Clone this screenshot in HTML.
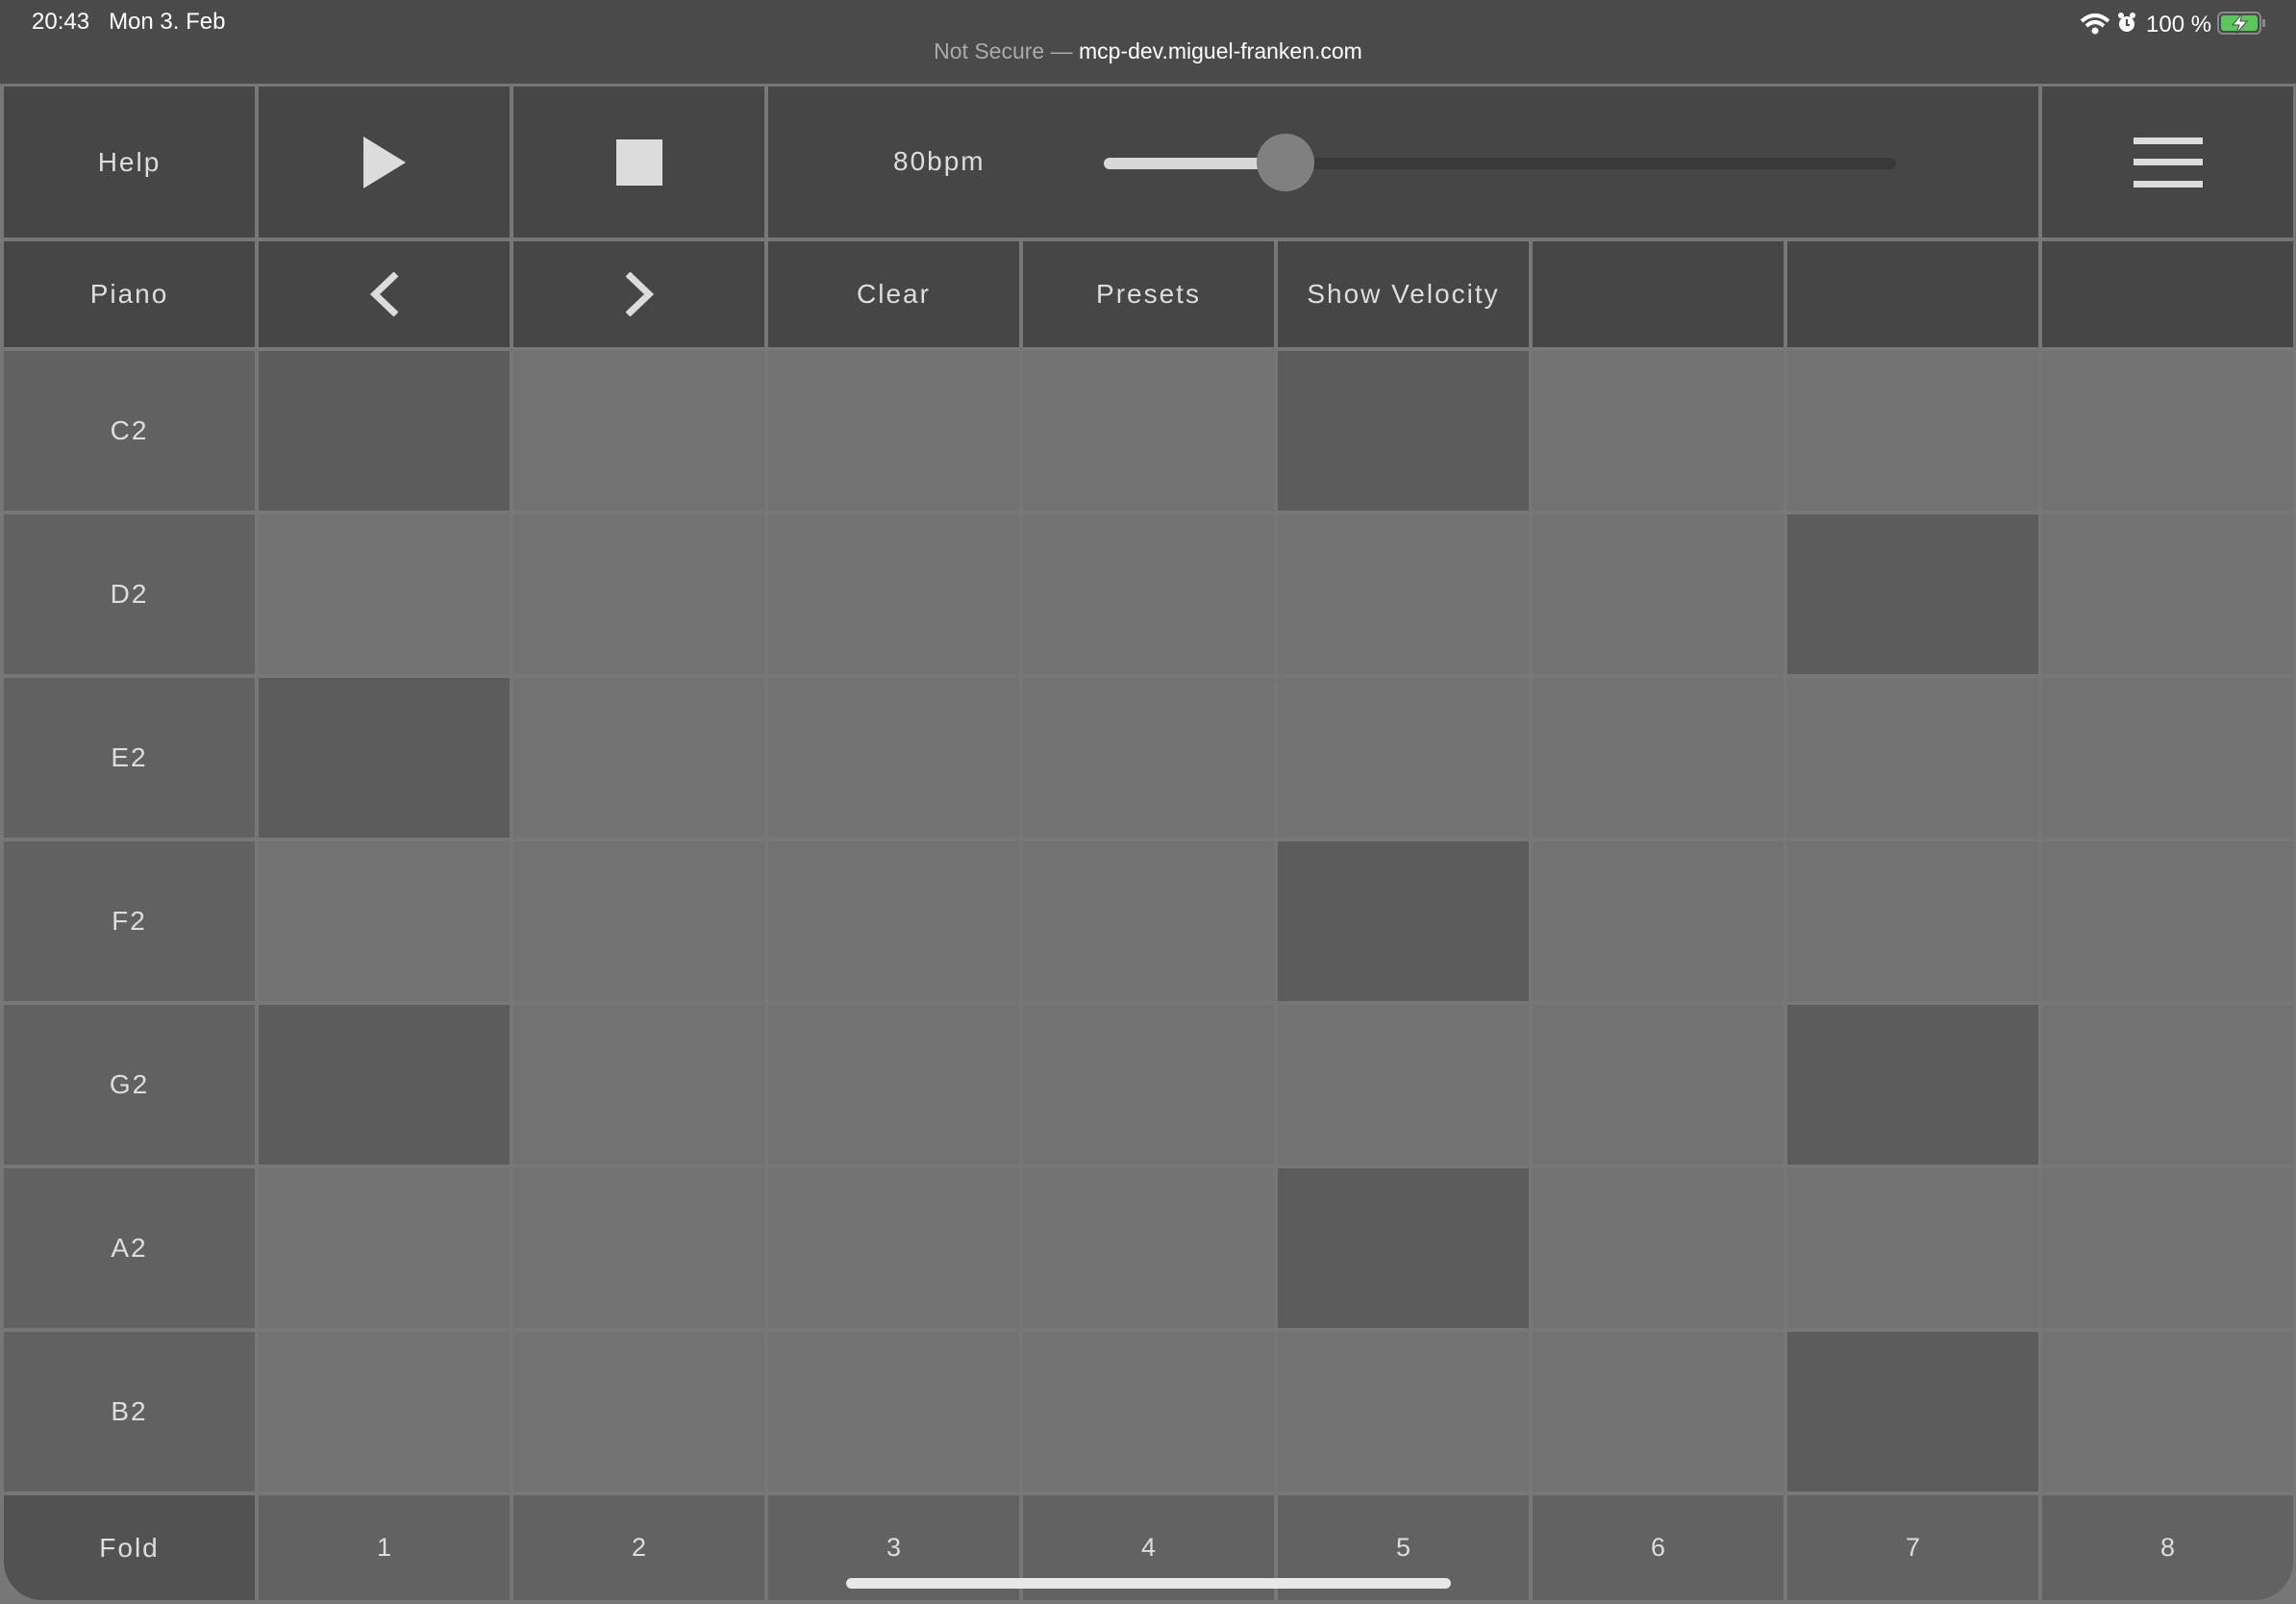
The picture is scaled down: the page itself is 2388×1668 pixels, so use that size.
<!DOCTYPE html>
<html><head><meta charset="utf-8"><style>
*{margin:0;padding:0;box-sizing:border-box}
html,body{width:2388px;height:1668px;overflow:hidden;background:#777;font-family:"Liberation Sans",sans-serif}
.sb{position:absolute;left:0;top:0;width:2388px;height:87px;background:#4a4a4a;color:#fff}
.grid{position:absolute;left:4px;top:90px;width:2381px;height:1575px;display:grid;grid-template-columns:repeat(9,261px);grid-template-rows:157px 110px repeat(7,166px) 109px;gap:4px}
.c{display:flex;align-items:center;justify-content:center;color:#ddd;font-size:28px;letter-spacing:2px;position:relative}
.t{background:#464646}
.l{background:#616161}
.o{background:#727272}
.n{background:#5c5c5c}
.b{background:#626262;font-size:27px;letter-spacing:0}
</style></head><body>
<div class="sb">
<div style="position:absolute;left:33px;top:9px;font-size:24px">20:43&nbsp;&nbsp;&nbsp;Mon 3. Feb</div>
<div style="position:absolute;left:0;width:2388px;top:40px;text-align:center;font-size:23px;color:#aaa">Not Secure — <span style="color:#fff">mcp-dev.miguel-franken.com</span></div>
<svg style="position:absolute;left:2163px;top:10px" width="200" height="30" viewBox="0 0 200 30">
<path d="M2 12 Q16 0 30 12" stroke="#fff" stroke-width="4" fill="none"/>
<path d="M7 17 Q16 9 25 17" stroke="#fff" stroke-width="4" fill="none"/>
<circle cx="16" cy="22" r="3.5" fill="#fff"/>
<circle cx="49" cy="15" r="8" fill="#fff"/><circle cx="43" cy="6" r="3" fill="#fff"/><circle cx="55" cy="6" r="3" fill="#fff"/>
<path d="M49 10v6h3" stroke="#4a4a4a" stroke-width="2" fill="none"/>
<text x="69" y="23" font-size="24" fill="#fff" font-family="Liberation Sans">100 %</text>
<rect x="144" y="3" width="44" height="22" rx="5" fill="none" stroke="#888" stroke-width="2"/>
<rect x="147" y="6" width="38" height="16" rx="3" fill="#5ac85a"/>
<rect x="190" y="10" width="3" height="8" fill="#888"/>
<path d="M169 4 L159 16 H166 L163 25 L174 12 H167 Z" fill="#fff" stroke="#4a4a4a" stroke-width="1"/>
</svg>
</div>
<div class="grid">
<div class="c t">Help</div>
<div class="c t"><svg width="44" height="54"><path d="M0 0 L44 27 L0 54Z" fill="#dcdcdc"/></svg></div>
<div class="c t"><svg width="48" height="48"><rect width="48" height="48" fill="#dcdcdc"/></svg></div>
<div class="c t" style="grid-column:span 5;justify-content:flex-start">
<span style="position:absolute;left:130px;top:62px">80bpm</span>
<div style="position:absolute;left:349px;top:74px;width:824px;height:12px;border-radius:6px;background:#393939"></div>
<div style="position:absolute;left:349px;top:74px;width:200px;height:12px;border-radius:6px 0 0 6px;background:#d8d8d8"></div>
<div style="position:absolute;left:508px;top:49px;width:60px;height:60px;border-radius:50%;background:#808080"></div>
</div>
<div class="c t"><svg width="72" height="52"><rect y="0" width="72" height="7" fill="#dcdcdc"/><rect y="22" width="72" height="7" fill="#dcdcdc"/><rect y="45" width="72" height="7" fill="#dcdcdc"/></svg></div>

<div class="c t">Piano</div>
<div class="c t"><svg width="32" height="46"><path d="M28 2 L6 23 L28 44" stroke="#dcdcdc" stroke-width="7" fill="none"/></svg></div>
<div class="c t"><svg width="32" height="46"><path d="M4 2 L26 23 L4 44" stroke="#dcdcdc" stroke-width="7" fill="none"/></svg></div>
<div class="c t">Clear</div>
<div class="c t">Presets</div>
<div class="c t">Show Velocity</div>
<div class="c t"></div><div class="c t"></div><div class="c t"></div>

<div class="c l">C2</div><div class="c n"></div><div class="c o"></div><div class="c o"></div><div class="c o"></div><div class="c n"></div><div class="c o"></div><div class="c o"></div><div class="c o"></div>
<div class="c l">D2</div><div class="c o"></div><div class="c o"></div><div class="c o"></div><div class="c o"></div><div class="c o"></div><div class="c o"></div><div class="c n"></div><div class="c o"></div>
<div class="c l">E2</div><div class="c n"></div><div class="c o"></div><div class="c o"></div><div class="c o"></div><div class="c o"></div><div class="c o"></div><div class="c o"></div><div class="c o"></div>
<div class="c l">F2</div><div class="c o"></div><div class="c o"></div><div class="c o"></div><div class="c o"></div><div class="c n"></div><div class="c o"></div><div class="c o"></div><div class="c o"></div>
<div class="c l">G2</div><div class="c n"></div><div class="c o"></div><div class="c o"></div><div class="c o"></div><div class="c o"></div><div class="c o"></div><div class="c n"></div><div class="c o"></div>
<div class="c l">A2</div><div class="c o"></div><div class="c o"></div><div class="c o"></div><div class="c o"></div><div class="c n"></div><div class="c o"></div><div class="c o"></div><div class="c o"></div>
<div class="c l">B2</div><div class="c o"></div><div class="c o"></div><div class="c o"></div><div class="c o"></div><div class="c o"></div><div class="c o"></div><div class="c n"></div><div class="c o"></div>

<div class="c" style="background:#525252;border-bottom-left-radius:40px">Fold</div>
<div class="c b">1</div><div class="c b">2</div><div class="c b">3</div><div class="c b">4</div><div class="c b">5</div><div class="c b">6</div><div class="c b">7</div><div class="c b" style="border-bottom-right-radius:40px">8</div>
</div>
<div style="position:absolute;left:880px;top:1641px;width:629px;height:11px;border-radius:6px;background:#e8e8e8"></div>
</body></html>
